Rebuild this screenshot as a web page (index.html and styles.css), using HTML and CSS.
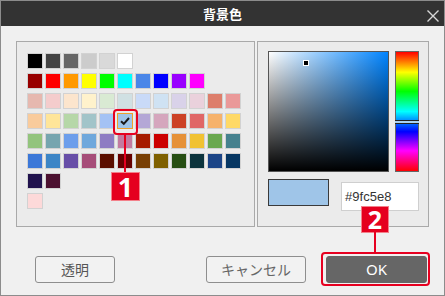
FILE: index.html
```html
<!DOCTYPE html>
<html lang="ja">
<head>
<meta charset="utf-8">
<link rel="stylesheet" href="styles.css">
</head>
<body>
<div class="window">
  <div class="titlebar">
    <span class="title">背景色</span>
    <svg class="close" viewBox="0 0 12 12"><path d="M0.5 0.5 L11.5 11.5 M11.5 0.5 L0.5 11.5" stroke="#d8d8d8" stroke-width="1.4" fill="none"/></svg>
  </div>
  <div class="content">
    <div class="panels">
      <div class="panel panel-left">
        <div class="palette">
          <div class="group">
            <span class="sw" style="background:#000000"></span><span class="sw" style="background:#434343"></span><span class="sw" style="background:#666666"></span><span class="sw" style="background:#cccccc"></span><span class="sw" style="background:#d9d9d9"></span><span class="sw" style="background:#ffffff"></span>
          </div>
          <div class="group">
            <span class="sw" style="background:#980000"></span><span class="sw" style="background:#ff0000"></span><span class="sw" style="background:#ff9900"></span><span class="sw" style="background:#ffff00"></span><span class="sw" style="background:#00ff00"></span><span class="sw" style="background:#00ffff"></span><span class="sw" style="background:#4a86e8"></span><span class="sw" style="background:#0000ff"></span><span class="sw" style="background:#9900ff"></span><span class="sw" style="background:#ff00ff"></span>
          </div>
          <div class="group">
            <span class="sw" style="background:#e6b8af"></span><span class="sw" style="background:#f4cccc"></span><span class="sw" style="background:#fce5cd"></span><span class="sw" style="background:#fff2cc"></span><span class="sw" style="background:#d9ead3"></span><span class="sw" style="background:#d0e0e3"></span><span class="sw" style="background:#c9daf8"></span><span class="sw" style="background:#cfe2f3"></span><span class="sw" style="background:#d9d2e9"></span><span class="sw" style="background:#ead1dc"></span><span class="sw" style="background:#dd7e6b"></span><span class="sw" style="background:#ea9999"></span>
            <span class="sw" style="background:#f9cb9c"></span><span class="sw" style="background:#ffe599"></span><span class="sw" style="background:#b6d7a8"></span><span class="sw" style="background:#a2c4c9"></span><span class="sw" style="background:#a4c2f4"></span><span class="sw sel" style="background:#9fc5e8"><svg viewBox="0 0 14 14"><path d="M3 7.2 L5.8 9.8 L11 4" stroke="#1a1a1a" stroke-width="2" fill="none"/></svg></span><span class="sw" style="background:#b4a7d6"></span><span class="sw" style="background:#d5a6bd"></span><span class="sw" style="background:#cc4125"></span><span class="sw" style="background:#e06666"></span><span class="sw" style="background:#f6b26b"></span><span class="sw" style="background:#ffd966"></span>
            <span class="sw" style="background:#93c47d"></span><span class="sw" style="background:#76a5af"></span><span class="sw" style="background:#6d9eeb"></span><span class="sw" style="background:#6fa8dc"></span><span class="sw" style="background:#8e7cc3"></span><span class="sw" style="background:#c27ba0"></span><span class="sw" style="background:#a61c00"></span><span class="sw" style="background:#cc0000"></span><span class="sw" style="background:#e69138"></span><span class="sw" style="background:#f1c232"></span><span class="sw" style="background:#6aa84f"></span><span class="sw" style="background:#45818e"></span>
            <span class="sw" style="background:#3c78d8"></span><span class="sw" style="background:#3d85c6"></span><span class="sw" style="background:#674ea7"></span><span class="sw" style="background:#a64d79"></span><span class="sw" style="background:#5b0f00"></span><span class="sw" style="background:#660000"></span><span class="sw" style="background:#783f04"></span><span class="sw" style="background:#7f6000"></span><span class="sw" style="background:#274e13"></span><span class="sw" style="background:#0c343d"></span><span class="sw" style="background:#1c4587"></span><span class="sw" style="background:#073763"></span>
            <span class="sw" style="background:#20124d"></span><span class="sw" style="background:#4c1130"></span>
          </div>
          <div class="group">
            <span class="sw" style="background:#fdd9d9"></span>
          </div>
        </div>
      </div>
      <div class="panel panel-right">
        <div class="picker">
          <div class="sv"><span class="sv-marker"></span></div>
          <div class="hue"><span class="hue-marker"></span></div>
        </div>
        <div class="values">
          <div class="preview"></div>
          <div class="hex">#9fc5e8</div>
        </div>
      </div>
    </div>
    <div class="buttons">
      <button class="btn btn-clear">透明</button>
      <span class="spacer"></span>
      <button class="btn btn-cancel">キャンセル</button>
      <button class="btn btn-ok">OK</button>
    </div>
  </div>

  <div class="callout-box c1-box"></div>
  <div class="callout-line c1-line"></div>
  <div class="badge b1">1</div>
  <div class="badge b2">2</div>
  <div class="callout-line c2-line"></div>
  <div class="callout-box c2-box"></div>
</div>
</body>
</html>
```

FILE: styles.css
```css
* { box-sizing: border-box; }
html, body { margin: 0; padding: 0; background: #f0f0f0; }
body { font-family: "Noto Sans CJK JP", "Noto Sans", sans-serif; }

.window {
  position: relative;
  width: 445px;
  height: 296px;
  border: 1px solid #8c8c8c;
  background: #f0f0f0;
  overflow: hidden;
}

.titlebar {
  height: 25px;
  background: #333333;
  display: grid;
  grid-template-columns: 1fr auto 1fr;
  align-items: center;
}
.title {
  grid-column: 2;
  color: #ffffff;
  font-weight: bold;
  font-size: 13px;
  line-height: 25px;
}
.close {
  grid-column: 3;
  justify-self: end;
  width: 12px;
  height: 12px;
  margin-right: 5px;
  margin-top: 4px;
}

.content { padding: 15px 14px 0 15px; }

.panels { display: flex; gap: 2px; height: 186px; }
.panel { border: 1px solid #a9a9a9; background: #ebebeb; height: 186px; }
.panel-left { width: 239px; padding: 11px 10px; }
.panel-right { width: 172px; padding: 9px 9px 0 10px; }

.palette { display: flex; flex-direction: column; gap: 4px; }
.group {
  display: grid;
  grid-template-columns: repeat(12, 16px);
  column-gap: 2px;
  row-gap: 4px;
}
.sw {
  display: block;
  width: 16px;
  height: 16px;
  border: 1px solid #d2d2d2;
}
.sw.sel { border-color: #f0a02a; }
.sw svg { display: block; width: 14px; height: 14px; }

.picker { display: flex; gap: 6px; }
.sv {
  position: relative;
  width: 121px;
  height: 121px;
  border: 1px solid #555;
  background:
    linear-gradient(to bottom, rgba(0,0,0,0), #000),
    linear-gradient(to right, #fff, #0084ff);
}
.sv-marker {
  position: absolute;
  left: 34px;
  top: 8px;
  width: 6px;
  height: 6px;
  background: #000;
  border: 1px solid #fff;
}
.hue {
  position: relative;
  width: 24px;
  height: 121px;
  border: 1px solid #666;
  background: linear-gradient(to bottom, #f00 0%, #ff0 17%, #0f0 33%, #0ff 50%, #00f 67%, #f0f 83%, #f00 100%);
}
.hue-marker {
  position: absolute;
  left: -1px;
  right: -1px;
  top: 68px;
  height: 4px;
  background: #a9d2f3;
  border-top: 1px solid #222;
  border-bottom: 1px solid #222;
}

.values { display: flex; align-items: flex-start; margin-top: 7px; }
.preview {
  width: 62px;
  height: 27px;
  border: 1px solid #3a3a3a;
  background: #9fc5e8;
}
.hex {
  margin-left: 12px;
  margin-top: 3px;
  width: 79px;
  height: 29px;
  border: 1px solid #cfcfcf;
  background: #ffffff;
  padding-left: 3px;
  font-family: "Liberation Sans", Arial, sans-serif;
  font-size: 13px;
  line-height: 27px;
  color: #333;
}

.buttons { display: flex; margin-top: 29px; padding: 0 3px 0 19px; }
.spacer { flex: 1; }
.btn {
  height: 27px;
  border: 1px solid #8e8e8e;
  border-radius: 3px;
  background: #f2f2f2;
  color: #555;
  font-family: "Noto Sans CJK JP", sans-serif;
  font-size: 14px;
  padding: 0;
  line-height: 25px;
}
.btn-clear { width: 80px; }
.btn-cancel { width: 100px; margin-right: 20px; color: #666; }
.btn-ok {
  width: 101px;
  background: #666666;
  border-color: #666666;
  color: #ffffff;
  font-family: "Noto Sans", sans-serif;
  font-size: 15px;
}

.callout-box {
  position: absolute;
  border: 2px solid #e60020;
  border-radius: 4px;
}
.c1-box { left: 112px; top: 108px; width: 25px; height: 26px; }
.c2-box { left: 320px; top: 251px; width: 109px; height: 34px; }
.callout-line { position: absolute; width: 2px; background: #e60020; }
.c1-line { left: 123px; top: 133px; height: 39px; }
.c2-line { left: 373px; top: 230px; height: 22px; }

.badge {
  position: absolute;
  background: #e5001e;
  border: 1px solid #f3808a;
  color: #fff;
  font-family: "Noto Sans", "Liberation Sans", sans-serif;
  font-weight: bold;
  text-align: center;
}
.b1 { left: 110px; top: 171px; width: 29px; height: 29px; font-size: 27px; line-height: 27px; }
.b2 { left: 360px; top: 205px; width: 28px; height: 27px; font-size: 25px; line-height: 25px; }
```
